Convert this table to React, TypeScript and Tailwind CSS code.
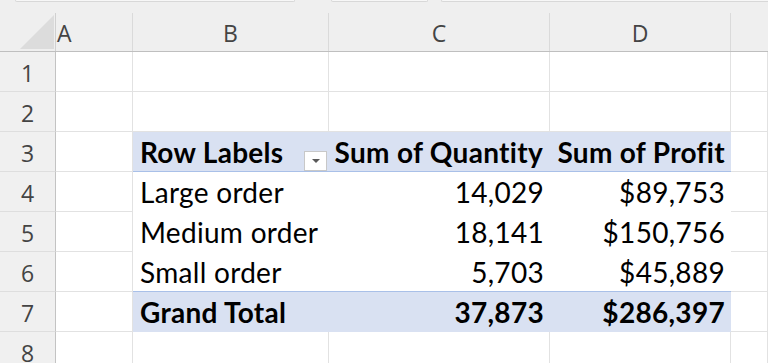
import React from "react";

const COLS = "grid grid-cols-[56px_77px_196px_221px_181px_1fr]";
const CELL = "border-r border-b border-[#e2e2e2] box-border";
const BODYFONT = "font-['Lato',sans-serif] text-[28px] leading-none tracking-[0.3px] text-black whitespace-nowrap";

function RowHead({ n }: { n: number }) {
  return (
    <div className="bg-[#f0f0f0] border-r border-r-[#c3c3c3] border-b border-b-[#dedede] flex items-center justify-center pt-[3px] font-['Open_Sans',sans-serif] text-[23px] text-[#444] box-border">
      {n}
    </div>
  );
}

function EmptyRow({ n }: { n: number }) {
  return (
    <div className={`${COLS} h-[40px]`}>
      <RowHead n={n} />
      <div className={CELL} />
      <div className={CELL} />
      <div className={CELL} />
      <div className={CELL} />
      <div className={CELL} />
    </div>
  );
}

function DataRow({
  n,
  label,
  qty,
  profit,
  kind,
}: {
  n: number;
  label: string;
  qty: string;
  profit: string;
  kind: "plain" | "last" | "total";
}) {
  const band =
    kind === "total"
      ? "bg-[#d9e1f2] border-b border-[#d9e1f2] font-bold"
      : kind === "last"
      ? "bg-white border-b border-[#a9c0e8]"
      : "bg-white border-b border-white";
  return (
    <div className={`${COLS} h-[40px]`}>
      <RowHead n={n} />
      <div className={CELL} />
      <div className={`${band} ${BODYFONT} flex items-end pl-[7px] pb-[5px] box-border`}>
        {label}
      </div>
      <div className={`${band} ${BODYFONT} flex items-end justify-end pr-[6px] pb-[5px] box-border`}>
        {qty}
      </div>
      <div className={`${band} ${BODYFONT} flex items-end justify-end pr-[6px] pb-[5px] box-border`}>
        {profit}
      </div>
      <div className={CELL} />
    </div>
  );
}

export default function App() {
  const hdr =
    "h-[38px] border-r border-[#dadada] flex items-center justify-center pt-[3px] font-['Open_Sans',sans-serif] text-[23px] text-[#444] box-border";
  return (
    <div className="w-[768px] h-[363px] overflow-hidden bg-white">
      {/* header area */}
      <div className="bg-[#efefef] border-b border-[#bfbfbf] h-[52px] box-border">
        <div className="flex h-[2px]">
          <div className="w-[15px]" />
          <div className="w-[280px] bg-[#f7f7f7] border-b border-x border-[#d8d8d8] rounded-b-[3px]" />
          <div className="w-[36px]" />
          <div className="w-[97px] bg-[#f7f7f7] border-b border-x border-[#d8d8d8] rounded-b-[3px]" />
          <div className="w-[13px]" />
          <div className="flex-1 bg-[#f7f7f7] border-b border-l border-[#d8d8d8] rounded-bl-[3px]" />
        </div>
        <div className={`${COLS} mt-[11px]`}>
          <div className="h-[38px] border-r border-[#d0d0d0] relative box-border">
            <svg width="56" height="38" viewBox="0 0 56 38" className="block">
              <polygon points="54,2 54,36 20,36" fill="#dcdcdc" />
            </svg>
          </div>
          <div className="h-[38px] border-r border-[#dadada] flex items-center justify-start pl-[1px] pt-[3px] font-['Open_Sans',sans-serif] text-[23px] text-[#444] box-border">
            A
          </div>
          <div className={hdr}>B</div>
          <div className={hdr}>C</div>
          <div className={hdr}>D</div>
          <div className="h-[38px]" />
        </div>
      </div>

      <EmptyRow n={1} />
      <EmptyRow n={2} />

      {/* pivot header row */}
      <div className={`${COLS} h-[40px]`}>
        <RowHead n={3} />
        <div className={CELL} />
        <div className={`bg-[#d9e1f2] border-b border-[#a9c0e8] ${BODYFONT} font-bold flex items-end pl-[7px] pb-[5px] box-border relative`}>
          Row Labels
          <div className="absolute right-[2px] bottom-0 w-[23px] h-[20px] bg-white border border-[#c8c8c8] flex items-center justify-center box-border">
            <svg width="8" height="4" viewBox="0 0 8 4">
              <polygon points="0,0 8,0 4,4" fill="#595959" />
            </svg>
          </div>
        </div>
        <div className={`bg-[#d9e1f2] border-b border-[#a9c0e8] ${BODYFONT} font-bold flex items-end justify-end pr-[7px] pb-[5px] box-border`}>
          Sum of Quantity
        </div>
        <div className={`bg-[#d9e1f2] border-b border-[#a9c0e8] ${BODYFONT} font-bold flex items-end justify-end pr-[6px] pb-[5px] box-border`}>
          Sum of Profit
        </div>
        <div className={CELL} />
      </div>

      <DataRow n={4} label="Large order" qty="14,029" profit="$89,753" kind="plain" />
      <DataRow n={5} label="Medium order" qty="18,141" profit="$150,756" kind="plain" />
      <DataRow n={6} label="Small order" qty="5,703" profit="$45,889" kind="last" />
      <DataRow n={7} label="Grand Total" qty="37,873" profit="$286,397" kind="total" />

      <EmptyRow n={8} />
    </div>
  );
}
